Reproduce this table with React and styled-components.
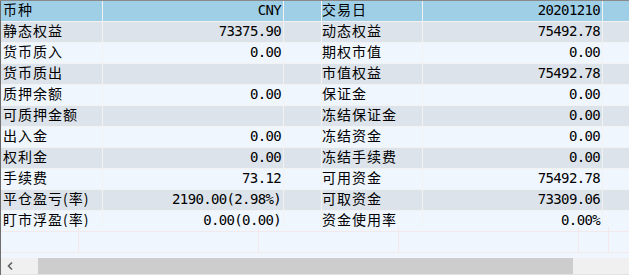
import React from "react";
import styled, { createGlobalStyle } from "styled-components";

const Global = createGlobalStyle`
  html, body { margin: 0; padding: 0; background: #ffffff; }
  body { width: 629px; height: 276px; overflow: hidden; }
`;

const Frame = styled.div`
  width: 629px;
  height: 276px;
  box-sizing: border-box;
  border-top: 1px solid #8a8a8a;
  display: flex;
  flex-direction: column;
  background: #ffffff;
`;

const Body = styled.div`
  display: flex;
  flex-direction: column;
  border-left: 1px solid #6e6e6e;
  background: #eff6fe;
  height: 274px;
  flex: none;
`;

const DataGrid = styled.div`
  height: 226px;
  flex: none;
  display: flex;
  flex-direction: column;
  gap: 1px;
`;

const Row = styled.div`
  display: grid;
  grid-template-columns: 101px 180px 37px 100px 179px 1fr;
  column-gap: 1px;
  height: 20px;
  flex: none;
  background: #f2f2f2;
  box-shadow: 0 1px 0 #f2f2f2;
`;

const rowColors = {
  head: "#9fcee7",
  gray: "#dce3ea",
  light: "#eff6fe",
};

const Cell = styled.div`
  background: ${(p) => rowColors[p.$tone]};
  height: 20px;
  box-sizing: border-box;
  white-space: nowrap;
  color: #000;
`;

const Label = styled(Cell)`
  font-family: "Noto Sans CJK SC", "Noto Sans", sans-serif;
  font-size: 14px;
  line-height: 16px;
  padding-left: ${(p) => (p.$first ? "2px" : "0px")};
  letter-spacing: 1px;
`;

const Value = styled(Cell)`
  font-family: "DejaVu Sans Mono", "Liberation Mono", monospace;
  font-size: 14px;
  line-height: 18px;
  letter-spacing: -0.65px;
  text-align: right;
  padding-right: 2px;
`;

const Filler = styled.div`
  height: 31px;
  flex: none;
  background: #eff6fe;
  display: grid;
  grid-template-rows: 4px 1px 20px 1px 5px;
`;

const FillRow = styled.div`
  display: grid;
  grid-template-columns: 77px 1px 179px 1px 139px 1px 179px 1px 29px 1px 1fr;
`;

const HLine = styled.div`
  background: #f3e9ea;
`;

const VLine = styled.div`
  background: ${(p) => (p.$on ? "#f3e9ea" : "transparent")};
`;

const Scrollbar = styled.div`
  height: 16px;
  flex: none;
  display: flex;
  background: #f0f0f0;
  border-bottom: 1px solid #e2e2e2;
`;

const ArrowBtn = styled.div`
  width: 37px;
  display: flex;
  align-items: center;
  padding-left: 6px;
  box-sizing: border-box;
`;

const Thumb = styled.div`
  width: 535px;
  background: #cdcdcd;
`;

const rows = [
  ["币种", "CNY", "交易日", "20201210"],
  ["静态权益", "73375.90", "动态权益", "75492.78"],
  ["货币质入", "0.00", "期权市值", "0.00"],
  ["货币质出", "", "市值权益", "75492.78"],
  ["质押余额", "0.00", "保证金", "0.00"],
  ["可质押金额", "", "冻结保证金", "0.00"],
  ["出入金", "0.00", "冻结资金", "0.00"],
  ["权利金", "0.00", "冻结手续费", "0.00"],
  ["手续费", "73.12", "可用资金", "75492.78"],
  ["平仓盈亏(率)", "2190.00(2.98%)", "可取资金", "73309.06"],
  ["盯市浮盈(率)", "0.00(0.00)", "资金使用率", "0.00%"],
];

function FillSegments() {
  const cells = [];
  for (let i = 0; i < 11; i++) {
    cells.push(<VLine key={i} $on={i % 2 === 1} />);
  }
  return cells;
}

export default function App() {
  return (
    <>
      <Global />
      <Frame>
        <Body>
          <DataGrid>
            {rows.map((r, i) => {
              const tone = i === 0 ? "head" : i % 2 === 1 ? "gray" : "light";
              return (
                <Row key={i}>
                  <Label $tone={tone} $first>{r[0]}</Label>
                  <Value $tone={tone}>{r[1]}</Value>
                  <Cell $tone={tone} />
                  <Label $tone={tone}>{r[2]}</Label>
                  <Value $tone={tone}>{r[3]}</Value>
                  <Cell $tone={tone} />
                </Row>
              );
            })}
          </DataGrid>
          <Filler>
            <FillRow><FillSegments /></FillRow>
            <HLine />
            <FillRow><FillSegments /></FillRow>
            <HLine />
            <div />
          </Filler>
          <Scrollbar>
            <ArrowBtn>
              <svg width="6" height="8" viewBox="0 0 6 8">
                <path d="M5 0.5 L1.5 4 L5 7.5" fill="none" stroke="#606060" strokeWidth="1.6" />
              </svg>
            </ArrowBtn>
            <Thumb />
          </Scrollbar>
        </Body>
      </Frame>
    </>
  );
}
